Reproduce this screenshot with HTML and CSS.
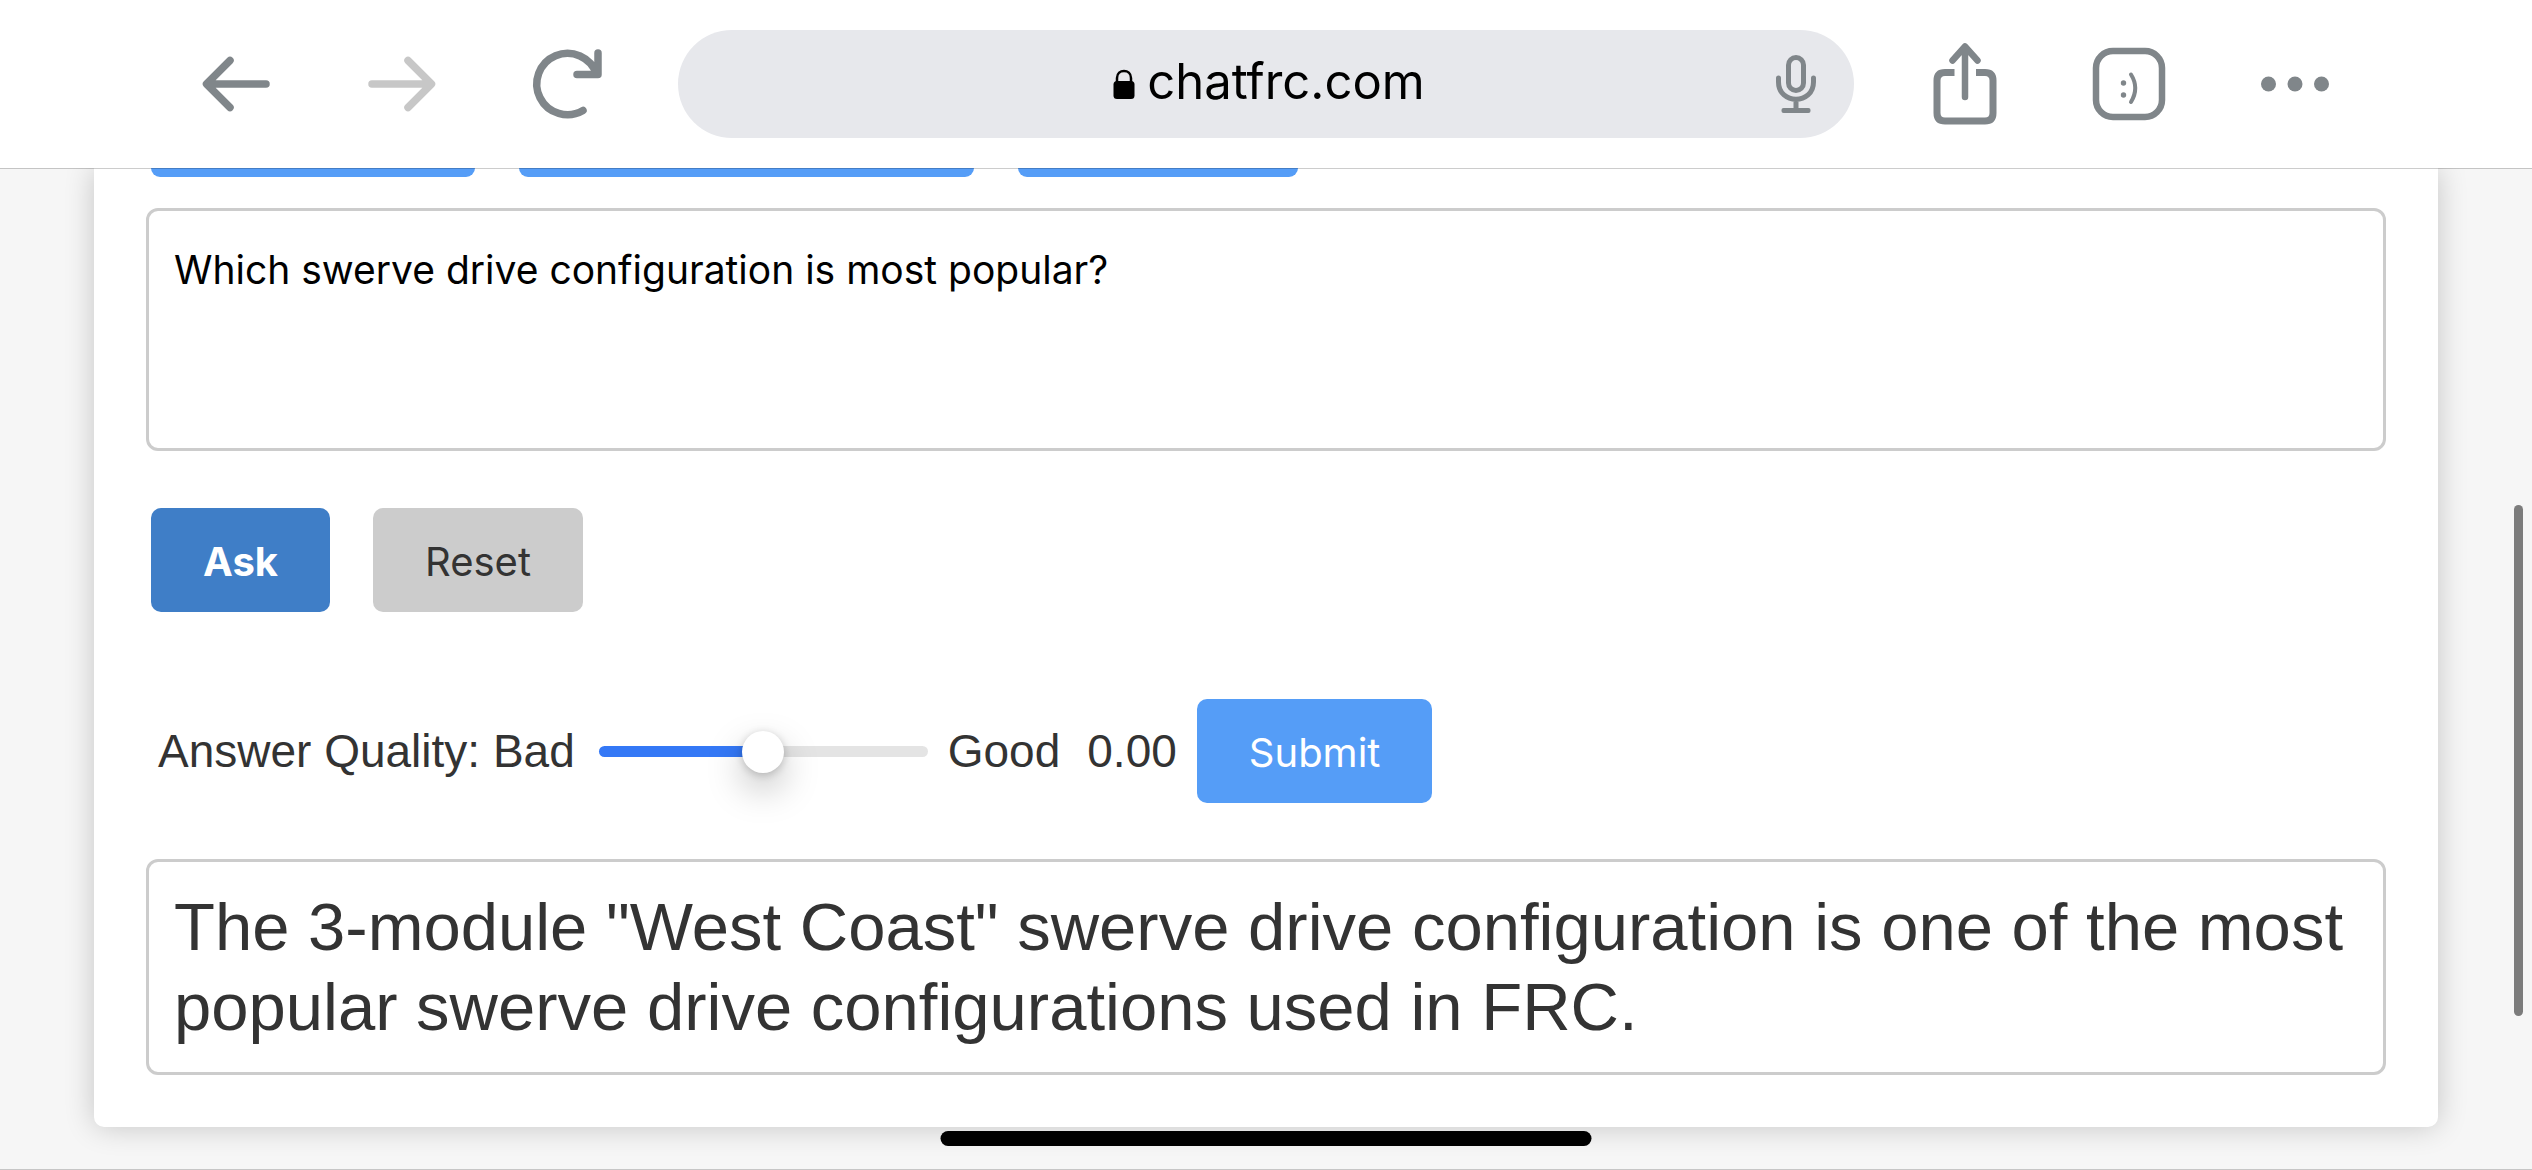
FILE: index.html
```html
<!DOCTYPE html>
<html lang="en">
<head>
  <meta charset="UTF-8">
  <meta name="viewport" content="width=device-width, initial-scale=1.0">
  <title>chatfrc.com</title>
  <link rel="stylesheet" href="styles.css">
</head>
<body>
  <!-- Browser toolbar -->
  <header class="toolbar">
    <button class="tool">
      <svg width="80" height="90" viewBox="0 0 80 90"><path d="M69 45H10M33 21.500L9.500 45L33 68.500" /></svg>
    </button>
    <button class="tool tool-off">
      <svg width="80" height="90" viewBox="0 0 80 90"><path d="M10 45H69M46 21.500L69.500 45L46 68.500" /></svg>
    </button>
    <button class="tool">
      <svg width="80" height="90" viewBox="0 0 80 90"><path d="M56 71.500A30.700 30.700 0 1 1 69.500 35M71 14V35.500H50" /></svg>
    </button>

    <div class="address">
      <button class="url">
        <svg class="lock" width="22" height="30" viewBox="0 0 22 30"><path d="M4 14V9C4 -0.500 18 -0.500 18 9V14" fill="none" stroke="#000" stroke-width="2.500" /><rect x="0.500" y="12" width="21" height="18" rx="3.500" /></svg>
        <span class="host">chatfrc.com</span>
      </button>
      <button class="mic">
        <svg width="42" height="60" viewBox="0 0 42 60"><rect x="13.500" y="3.500" width="15" height="33" rx="7.500" /><path d="M3.500 24V28C3.500 51 38.500 51 38.500 28V24M21 46V56" /><rect class="solid" x="6.500" y="54" width="29" height="5" rx="2" /></svg>
      </button>
    </div>

    <button class="tool">
      <svg width="80" height="90" viewBox="0 0 80 90"><path class="flat" d="M29.500 33.500H20Q12 33.500 12 41.500V74Q12 82 20 82H60Q68 82 68 74V41.500Q68 33.500 60 33.500H51" /><path class="thin" d="M40 58V8M27.500 21.500L40 7.500L52.500 21.500" /></svg>
    </button>
    <button class="tool">
      <svg width="80" height="90" viewBox="0 0 80 90"><rect class="frame" x="6" y="12" width="66" height="66" rx="17" /><circle class="solid" cx="33.500" cy="44" r="2.700" /><circle class="solid" cx="33.500" cy="56" r="2.700" /><path class="hair" d="M41 35.500Q49.500 49 41 63" /></svg>
    </button>
    <button class="tool">
      <svg width="80" height="90" viewBox="0 0 80 90"><circle class="solid" cx="13.500" cy="45" r="7.500" /><circle class="solid" cx="40" cy="45" r="7.500" /><circle class="solid" cx="66.500" cy="45" r="7.500" /></svg>
    </button>
  </header>

  <!-- Page -->
  <main class="page">
    <div class="container">
      <!-- Example questions, scrolled under the toolbar -->
      <div class="examples">
        <button class="example"></button>
        <button class="example example-wide"></button>
        <button class="example example-small"></button>
      </div>

      <textarea class="question" id="question" aria-labelledby="ask">Which swerve drive configuration is most popular?</textarea>

      <div class="buttons">
        <button class="btn btn-ask" id="ask">Ask</button>
        <button class="btn btn-reset">Reset</button>
      </div>

      <div class="rating">
        <label for="quality">Answer Quality: Bad</label>
        <input type="range" id="quality" min="-1" max="1" step="0.01" value="0">
        <span>Good</span>
        <output class="score" id="score" for="quality">0.00</output>
        <button class="btn">Submit</button>
      </div>

      <div class="answer">The 3-module "West Coast" swerve drive configuration is one of the most popular swerve drive configurations used in FRC.</div>
    </div>
  </main>

  <div class="scrollbar"></div>
  <div class="home-indicator"></div>

  <script>
    const quality = document.getElementById('quality');
    const score = document.getElementById('score');

    // Keep the blue part of the track and the number in step with the thumb
    quality.addEventListener('input', () => {
      score.textContent = Number(quality.value).toFixed(2);
      quality.style.setProperty('--fill', (Number(quality.value) + 1) * 50 + '%');
    });
  </script>
</body>
</html>
```
FILE: styles.css
```css
* {
  box-sizing: border-box;
}

body {
  margin: 0;
  min-height: 100vh;
  display: flex;
  flex-direction: column;
  background: #f6f6f6;
  color: #333;
  font-family: "Liberation Sans", Arial, sans-serif;
  font-size: 46px;
}

button {
  border: none;
  padding: 0;
  cursor: pointer;
  font-family: Inter, "Liberation Sans", sans-serif;
}

/* Toolbar */
.toolbar {
  position: relative;
  z-index: 1;
  display: flex;
  align-items: center;
  height: 168px;
  padding: 0 155px 0 154px;
  background: #fff;
  box-shadow: 0 1px rgba(0, 0, 0, 0.2);
}

.tool {
  width: 165px;
  height: 90px;
  background: none;
  color: #80868a;
}

.tool-off {
  color: #c7c7c7;
}

.tool svg,
.mic svg {
  display: block;
  margin: 0 auto;
  fill: none;
  stroke: currentColor;
  stroke-width: 7.5;
  stroke-linecap: round;
  stroke-linejoin: round;
}

.tool .flat {
  stroke-width: 7;
  stroke-linecap: butt;
}

.tool .thin {
  stroke-width: 6.5;
}

.tool .frame {
  stroke-width: 6.5;
}

.tool .hair {
  stroke-width: 4;
}

.tool .solid,
.mic .solid {
  fill: currentColor;
  stroke: none;
}

/* Address bar */
.address {
  flex: 1;
  display: grid;
  grid-template-columns: 1fr auto 1fr;
  align-items: center;
  height: 108px;
  margin: 0 28px 0 29px;
  border-radius: 54px;
  background: #e7e8ec;
}

.url {
  grid-column: 2;
  display: flex;
  align-items: center;
  gap: 12px;
  padding-left: 6px;
  background: none;
  color: #000;
  font-size: 49px;
  line-height: 60px;
}

.host {
  padding-bottom: 4px;
}

.mic {
  justify-self: end;
  margin-right: 37px;
  background: none;
  color: #80868a;
}

.mic svg {
  stroke-width: 5;
}

/* Page */
.page {
  flex: 1;
  padding: 0 94px 40px;
  border-bottom: 1px solid #c6c6c6;
  overflow: hidden;
}

.container {
  padding: 0 52px 52px;
  background: #fff;
  border-radius: 0 0 10px 10px;
  box-shadow: 0 0 30px rgba(0, 0, 0, 0.2);
}

.examples {
  display: flex;
  gap: 44px;
  padding: 0 5px;
}

.example {
  width: 324px;
  height: 9px;
  background: #559df7;
  border-radius: 0 0 9px 9px;
}

.example-wide {
  width: 455px;
}

.example-small {
  width: 280px;
}

.question {
  display: block;
  width: 100%;
  height: 243px;
  margin-top: 31px;
  padding: 35px 25px;
  border: 3px solid #ccc;
  border-radius: 12px;
  resize: none;
  background: #fff;
  color: #000;
  font-family: Inter, "Liberation Sans", sans-serif;
  font-size: 39px;
  line-height: 48px;
}

/* Buttons */
.buttons {
  display: flex;
  gap: 43px;
  margin-top: 57px;
  padding: 0 5px;
}

.btn {
  height: 104px;
  padding: 2px 52px 0;
  border-radius: 10px;
  background: #559df7;
  color: #fff;
  font-size: 40px;
}

.btn-ask {
  background: #3f7ec7;
  font-weight: bold;
}

.btn-reset {
  background: #ccc;
  color: #333;
}

/* Rating */
.rating {
  display: flex;
  align-items: center;
  margin-top: 87px;
  padding-left: 12px;
}

.rating input {
  --fill: 50%;
  appearance: none;
  width: 329px;
  height: 42px;
  margin: 0 20px 0 24px;
  background: none;
}

.rating input::-webkit-slider-runnable-track {
  height: 11px;
  border-radius: 6px;
  background: linear-gradient(to right, #3478f6 var(--fill), #e4e4e4 var(--fill));
}

.rating input::-webkit-slider-thumb {
  appearance: none;
  width: 42px;
  height: 42px;
  margin-top: -15px;
  border-radius: 50%;
  background: #fff;
  box-shadow: 0 16px 36px rgba(0, 0, 0, 0.25), 0 2px 8px rgba(0, 0, 0, 0.2);
}

.score {
  margin: 0 20px 0 27px;
}

/* Answer */
.answer {
  margin-top: 56px;
  padding: 25px;
  border: 3px solid #ccc;
  border-radius: 12px;
  font-size: 67px;
  line-height: 80px;
}

/* Overlays */
.scrollbar {
  position: absolute;
  top: 505px;
  right: 9px;
  z-index: 2;
  width: 9px;
  height: 511px;
  border-radius: 5px;
  background: #7c7c7c;
}

.home-indicator {
  position: absolute;
  bottom: 24px;
  left: 50%;
  z-index: 2;
  width: 651px;
  height: 15px;
  border-radius: 8px;
  background: #000;
  transform: translateX(-50%);
}
```
